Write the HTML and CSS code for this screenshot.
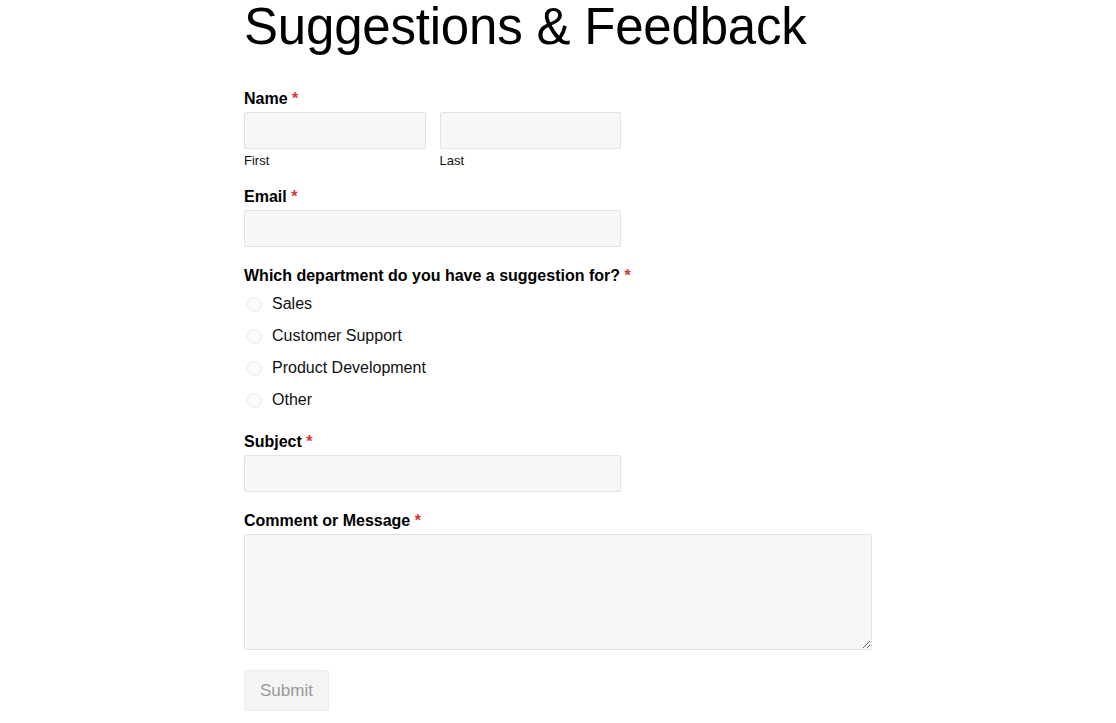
FILE: index.html
```html
<!DOCTYPE html>
<html lang="en">
<head>
<meta charset="utf-8">
<title>Suggestions &amp; Feedback</title>
<link rel="stylesheet" href="styles.css">
</head>
<body>
<main class="page">
  <h1 class="title">Suggestions &amp; Feedback</h1>
  <form class="form">
    <div class="field">
      <label class="label">Name <span class="req">*</span></label>
      <div class="name-row">
        <div class="name-col">
          <input class="input" type="text">
          <span class="sublabel">First</span>
        </div>
        <div class="name-col">
          <input class="input" type="text">
          <span class="sublabel">Last</span>
        </div>
      </div>
    </div>
    <div class="field">
      <label class="label">Email <span class="req">*</span></label>
      <input class="input medium" type="email">
    </div>
    <div class="field">
      <label class="label">Which department do you have a suggestion for? <span class="req">*</span></label>
      <ul class="choices">
        <li class="choice"><span class="radio"></span><span>Sales</span></li>
        <li class="choice"><span class="radio"></span><span>Customer Support</span></li>
        <li class="choice"><span class="radio"></span><span>Product Development</span></li>
        <li class="choice"><span class="radio"></span><span>Other</span></li>
      </ul>
    </div>
    <div class="field">
      <label class="label">Subject <span class="req">*</span></label>
      <input class="input medium" type="text">
    </div>
    <div class="field">
      <label class="label">Comment or Message <span class="req">*</span></label>
      <textarea class="textarea"></textarea>
    </div>
    <div class="actions">
      <button class="submit" type="button">Submit</button>
    </div>
  </form>
</main>
</body>
</html>
```

FILE: styles.css
```css
* { box-sizing: border-box; }
html, body { margin: 0; padding: 0; background: #fff; }
body {
  font-family: "Liberation Sans", Arial, Helvetica, sans-serif;
  color: #000;
}
.page {
  width: 628px;
  margin-left: 244px;
}
.title {
  margin: 0;
  font-weight: 400;
  font-size: 51px;
  line-height: 54px;
  letter-spacing: -0.2px;
  color: #000;
}
.form {
  margin-top: 35px;
  display: flex;
  flex-direction: column;
}
.field {
  display: flex;
  flex-direction: column;
  margin-bottom: 19px;
}
.label {
  font-size: 16px;
  font-weight: 700;
  line-height: 20px;
  margin-bottom: 3px;
}
.req { color: #d63637; font-weight: 700; }
.name-row {
  display: flex;
  gap: 14px;
  width: 377px;
}
.name-col {
  flex: 1;
  display: flex;
  flex-direction: column;
}
.input {
  height: 37px;
  width: 100%;
  background: #f7f7f7;
  border: 1px solid #e2e2e2;
  border-radius: 2px;
  font: inherit;
  margin: 0;
}
.input.medium { width: 377px; }
.sublabel {
  font-size: 13px;
  line-height: 15px;
  margin-top: 4px;
  color: #111;
}
.choices {
  list-style: none;
  margin: 2px 0 0;
  padding: 0;
}
.choice {
  display: flex;
  align-items: center;
  height: 26px;
  margin-bottom: 6px;
  font-size: 16px;
  color: #111;
}
.choice:last-child { margin-bottom: 0; }
.radio {
  width: 15px;
  height: 15px;
  border-radius: 50%;
  border: 1px solid #e9e9e9;
  background: #fafafa;
  margin-left: 3px;
  margin-right: 10px;
}
.textarea {
  width: 628px;
  height: 116px;
  background: #f7f7f7;
  border: 1px solid #e2e2e2;
  border-radius: 2px;
  margin: 0;
  font: inherit;
  display: block;
}
.actions { margin-top: 1px; }
.submit {
  width: 85px;
  height: 41px;
  background: #f4f4f4;
  border: 1px solid #ececec;
  border-radius: 2px;
  color: #9a9a9a;
  font-family: "Liberation Sans", Arial, sans-serif;
  font-size: 17px;
  padding: 0;
}
```
